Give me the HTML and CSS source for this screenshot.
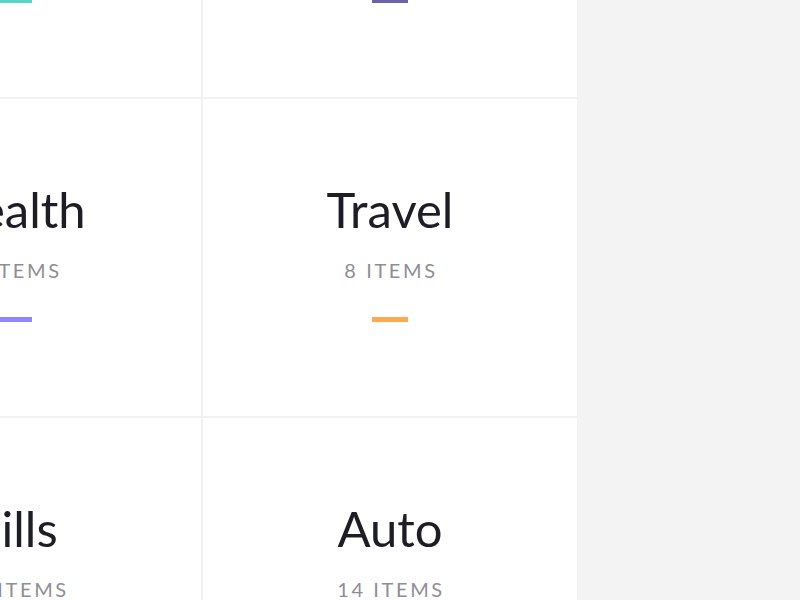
FILE: index.html
```html
<!DOCTYPE html>
<html lang="en">
<head>
<meta charset="utf-8">
<title>Categories</title>
<link rel="stylesheet" href="styles.css">
</head>
<body>
<main class="page">
  <section class="grid">
    <div class="cell">
      <h2 class="title">Home</h2>
      <p class="count">6 items</p>
      <span class="bar bar-teal"></span>
    </div>
    <div class="cell">
      <h2 class="title">Shopping</h2>
      <p class="count">9 items</p>
      <span class="bar bar-indigo"></span>
    </div>
    <div class="cell">
      <h2 class="title">Health</h2>
      <p class="count">5 items</p>
      <span class="bar bar-violet"></span>
    </div>
    <div class="cell">
      <h2 class="title">Travel</h2>
      <p class="count">8 items</p>
      <span class="bar bar-orange"></span>
    </div>
    <div class="cell">
      <h2 class="title">Bills</h2>
      <p class="count">12 items</p>
      <span class="bar bar-pink"></span>
    </div>
    <div class="cell">
      <h2 class="title">Auto</h2>
      <p class="count">14 items</p>
      <span class="bar bar-blue"></span>
    </div>
  </section>
</main>
</body>
</html>
```

FILE: styles.css
```css
html, body {
  margin: 0;
  padding: 0;
}

body {
  background: #f3f3f3;
  font-family: "Lato", "Open Sans", sans-serif;
  height: 600px;
  overflow: hidden;
}

.page {
  display: block;
}

.grid {
  display: grid;
  grid-template-columns: 374px 374px;
  grid-auto-rows: 317px;
  gap: 2px;
  background: #f1f1f1;
  width: max-content;
  margin-left: -173px;
  margin-top: -220px;
}

.cell {
  background: #ffffff;
  display: flex;
  flex-direction: column;
  align-items: center;
  padding-top: 82px;
}

.title {
  margin: 0;
  font-size: 49px;
  line-height: 56px;
  font-weight: 400;
  color: #1d1d26;
}

.count {
  margin: 21px 0 0 2px;
  font-size: 20px;
  line-height: 24px;
  letter-spacing: 2.6px;
  text-transform: uppercase;
  color: #8e8e93;
}

.bar {
  display: block;
  width: 36px;
  height: 5px;
  margin-top: 35px;
}

.bar-teal { background: #56d5c3; }
.bar-indigo { background: #6b64a9; }
.bar-violet { background: #8f86f9; }
.bar-orange { background: #fbaa4f; }
.bar-pink { background: #f76d8c; }
.bar-blue { background: #4aa3f0; }
```
